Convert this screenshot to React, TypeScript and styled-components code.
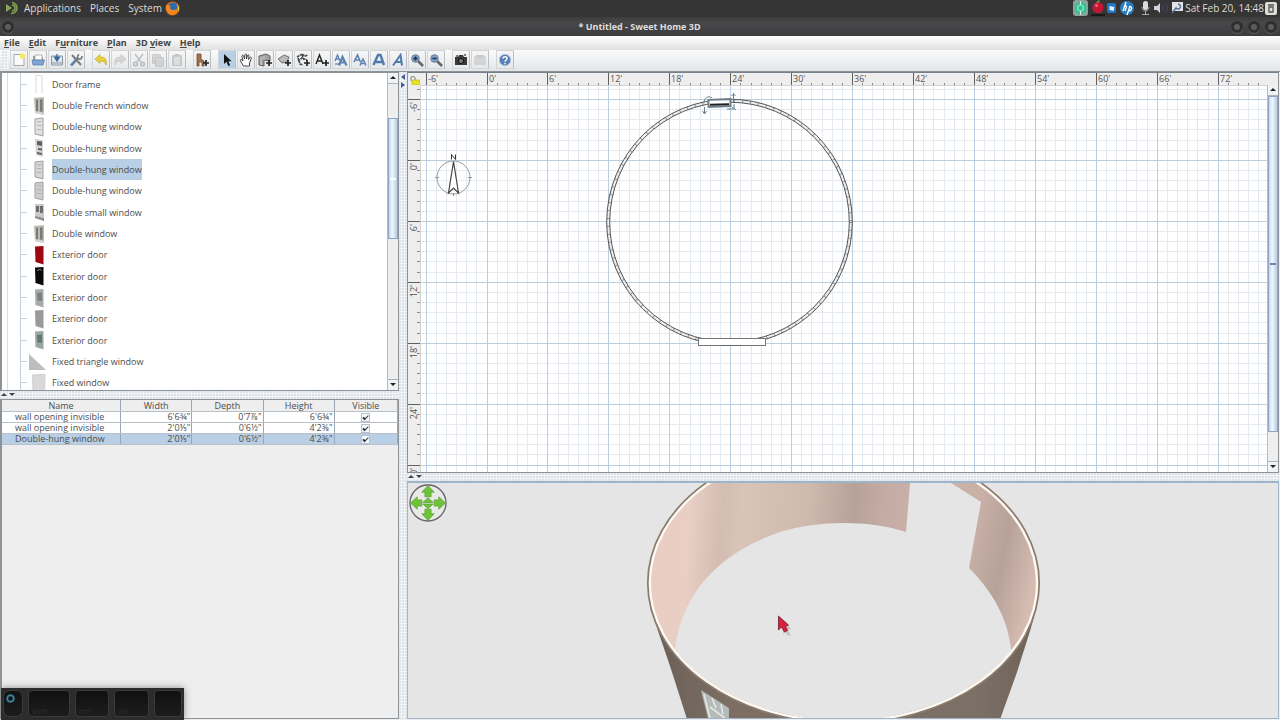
import React, { useLayoutEffect, useRef, useState } from 'react';
import styled, { createGlobalStyle, css } from 'styled-components';

const GlobalStyle = createGlobalStyle`
  *, *::before, *::after { box-sizing: border-box; }
  html, body, #root { height: 100%; }
  body {
    margin: 0;
    overflow: hidden;
    background: #eeeeee;
    color: #4c4c4c;
    font-family: 'Open Sans', 'Noto Sans', sans-serif;
    font-size: 9px;
    line-height: 11px;
  }
  button { font: inherit; color: inherit; padding: 0; border: 0; background: none; }
  ul { list-style: none; margin: 0; padding: 0; }
  svg { display: block; }
`;

const Desktop = styled.div`
  display: flex;
  flex-direction: column;
  height: 100%;
`;

/* ---------- desktop panel and window frame ---------- */

const Panel = styled.header`
  display: flex;
  align-items: center;
  flex: none;
  height: 17px;
  padding: 0 3px 1px 5px;
  background: #353535;
  color: #dedbd5;
  font-size: 10px;
  line-height: 16px;
`;
const PanelMenus = styled.nav`
  display: flex;
  gap: 9px;
  margin-right: 3px;
`;
const PanelMenu = styled.button`
  line-height: 16px;
`;
const PanelLogo = styled.span`
  width: 19px;
`;
const Tray = styled.div`
  display: flex;
  align-items: center;
  gap: 1px;
  margin-left: auto;
`;

const TitleBar = styled.div`
  display: grid;
  grid-template-columns: 60px 1fr 60px;
  align-items: center;
  flex: none;
  height: 19px;
  padding: 0 3px 0 2px;
  background: linear-gradient(#3d3d3d, #48484a 30%, #3c3c3e);
  color: #dedede;
`;
const WindowTitle = styled.h1`
  margin: 0;
  text-align: center;
  font-size: 9px;
  font-weight: 700;
  line-height: 16px;
`;
const WindowButtons = styled.div<{ $end?: boolean }>`
  display: flex;
  gap: 5px;
  justify-content: ${p => (p.$end ? 'flex-end' : 'flex-start')};
`;
const WindowButton = styled.button`
  width: 12px;
  height: 12px;
  border-radius: 50%;
  border: 3px solid #2f2f30;
  background: #5c5c5c;
  box-shadow: 0 1px 0 #5c5c5c;
`;

/* ---------- menu bar and toolbar ---------- */

const MenuBar = styled.nav`
  display: flex;
  align-items: flex-start;
  flex: none;
  gap: 9px;
  height: 14px;
  padding: 0 4px;
  background: linear-gradient(#ffffff, #e0e0e0);
`;
const MenuButton = styled.button`
  font-weight: 700;
  line-height: 13px;
  color: #444444;
`;

const ToolBar = styled.div`
  display: flex;
  align-items: center;
  flex: none;
  height: 22px;
  padding: 0 0 2px 2px;
  background: linear-gradient(#fbfbfb, #e2e5e8);
  border-bottom: 1px solid #8d9499;
`;
const dots = css`
  background-color: #f3f5f7;
  background-image: radial-gradient(circle at 1px 1px, #dbe1e7 1px, transparent 1px);
  background-size: 3px 3px;
`;
const Grip = styled.span`
  width: 6px;
  height: 18px;
  margin-right: 2px;
  ${dots}
`;
const ToolGroup = styled.div`
  display: flex;
  gap: 1px;
  margin-right: 7px;
`;
const Tool = styled.button<{ $active?: boolean; $dim?: boolean }>`
  display: grid;
  place-items: center;
  width: 18px;
  height: 19px;
  border: 1px solid #d3d6d9;
  border-right-color: #bcc0c4;
  background: ${p => (p.$active ? '#b8cfe5' : 'linear-gradient(#f6f6f6, #e6e8ea)')};
  svg { opacity: ${p => (p.$dim ? 0.3 : 1)}; }
`;

/* ---------- split panes ---------- */

const Workspace = styled.main`
  display: grid;
  flex: 1;
  min-height: 0;
  padding-bottom: 1px;
  grid-template-columns: 399px 8px minmax(0, 1fr);
`;
const LeftColumn = styled.div`
  display: grid;
  min-height: 0;
  grid-template-rows: minmax(0, 1fr) 8px 49.5%;
`;
const RightColumn = styled.div`
  display: grid;
  min-width: 0;
  min-height: 0;
  padding-right: 1px;
  grid-template-rows: minmax(0, 1fr) 8px 36.8%;
`;
const Divider = styled.div<{ $vertical?: boolean }>`
  display: flex;
  flex-direction: ${p => (p.$vertical ? 'column' : 'row')};
  gap: 2px;
  padding: ${p => (p.$vertical ? '2px 1px' : '1px 1px')};
  ${dots}
`;
const DividerButton = styled.button`
  display: grid;
  place-items: center;
  width: 6px;
  height: 6px;
  background: #eef0f2;
`;

/* ---------- furniture catalog ---------- */

const CatalogPane = styled.section`
  display: flex;
  min-height: 0;
  overflow: hidden;
  background: #ffffff;
  border: solid #8d9499;
  border-width: 1px 1px 1px 2px;
`;
const CatalogList = styled.ul`
  flex: 1;
  margin-left: 5px;
  border-left: 1px solid #d5dee8;
`;
const CatalogItem = styled.li`
  display: flex;
  align-items: center;
  height: 21px;
  margin-left: 12px;
  border-left: 1px solid #c3cfdd;
  &:nth-child(3n + 1) { height: 22px; }
  &::before {
    content: '';
    width: 6px;
    border-top: 1px solid #c3cfdd;
  }
`;
const CatalogIcon = styled.span`
  width: 20px;
  margin: 0 3px 0 2px;
`;
const CatalogName = styled.button<{ $selected?: boolean }>`
  height: 21px;
  font-size: 9px;
  line-height: 21px;
  background: ${p => (p.$selected ? '#b8cfe5' : 'transparent')};
`;

/* ---------- scroll bars ---------- */

const ScrollBar = styled.div`
  display: flex;
  flex-direction: column;
  width: 11px;
  background: #eeeeee;
  border-left: 1px solid #b4bec8;
`;
const ScrollArrow = styled.button`
  display: grid;
  place-items: center;
  flex: none;
  height: 11px;
  background: #f2f2f2;
  border: solid #a9b4c0;
  border-width: 0 0 1px;
  &:last-child { border-width: 1px 0 0; }
`;
const ScrollTrack = styled.div<{ $before: number; $size: number; $after: number }>`
  display: grid;
  flex: 1;
  grid-template-rows: ${p => `${p.$before}fr ${p.$size}fr ${p.$after}fr`};
`;
const ScrollThumb = styled.div<{ $mark: string }>`
  display: grid;
  grid-row: 2;
  place-items: center;
  border: 1px solid #8ba6c9;
  background: linear-gradient(90deg, #c2d5ec, #f3f7fc 40%, #b6cdea);
  &::after {
    content: '';
    width: 6px;
    height: 2px;
    background: ${p => p.$mark};
  }
`;

/* ---------- furniture table ---------- */

const TablePane = styled.section`
  min-height: 0;
  overflow: hidden;
  background: #eeeeee;
  border: solid #8d9499;
  border-width: 1px 1px 1px 2px;
`;
const FurnitureTable = styled.table`
  width: 100%;
  table-layout: fixed;
  border-collapse: collapse;
  th, td {
    height: 11px;
    padding: 0 1px;
    line-height: 10px;
    border-right: 1px solid #9ba7b4;
    border-bottom: 1px solid #b9c0c8;
    white-space: nowrap;
  }
  th { height: 12px; font-weight: 400; text-align: center; background: #eeeeee; }
`;
const Col = styled.col<{ $w: number }>`
  width: ${p => p.$w}%;
`;
const Row = styled.tr<{ $selected?: boolean }>`
  background: ${p => (p.$selected ? '#b8cfe5' : '#ffffff')};
  td { text-align: right; }
  td:first-child { text-align: left; padding-left: 13px; }
  td:last-child { text-align: center; }
`;
const Check = styled.input`
  appearance: none;
  display: grid;
  place-items: center;
  width: 9px;
  height: 9px;
  margin: 0 auto;
  border: 1px solid #b4c2d2;
  background: #f6f9fc;
  &:checked::before {
    content: '';
    width: 3px;
    height: 6px;
    border: solid #333333;
    border-width: 0 1px 2px 0;
    transform: rotate(45deg);
  }
`;

/* ---------- plan and 3D view ---------- */

const PlanPane = styled.section`
  display: grid;
  position: relative;
  min-height: 0;
  grid-template-columns: minmax(0, 1fr) 11px;
  grid-template-rows: 12px minmax(0, 1fr);
  border: 1px solid #8d9499;
  border-top-color: #75808a;
  background: #eeeeee;
`;
const PlanCanvas = styled.div`
  grid-row: 1 / 3;
  grid-column: 1;
  min-width: 0;
  min-height: 0;
  overflow: hidden;
`;
const PlanScroll = styled(ScrollBar)`
  grid-row: 2;
  grid-column: 2;
`;
const LockButton = styled.button`
  position: absolute;
  left: 2px;
  top: 2px;
`;
const ViewPane = styled.section`
  position: relative;
  min-height: 0;
  overflow: hidden;
  background: #e5e5e5;
  border: 1px solid #9db4ca;
  border-top-width: 2px;
`;
const NavControl = styled.div`
  position: absolute;
  left: 1px;
  top: 1px;
`;

/* ---------- on-screen key display ---------- */

const Keys = styled.div`
  position: fixed;
  left: 1px;
  bottom: 0;
  display: flex;
  gap: 5px;
  width: 183px;
  height: 32px;
  padding: 2px 2px 3px;
  background: #2c2c2d;
  box-shadow: 0 0 7px #8c8c8c;
`;
const Key = styled.span<{ $grow: number }>`
  flex: ${p => p.$grow} 1 0;
  padding: 14px 3px 0;
  border: 1px solid #3a3a3a;
  border-radius: 4px;
  background: linear-gradient(#111111, #1c1c1c);
  color: #303030;
  font-size: 8px;
  line-height: 11px;
`;
const MouseKey = styled(Key)`
  padding: 2px 1px;
  border-radius: 7px;
`;

/* ---------- small drawings ---------- */

type Dir = 'up' | 'down' | 'left' | 'right';
const arrowPaths: Record<Dir, string> = {
  up: 'M0 4 3 1 6 4z',
  down: 'M0 1 3 4 6 1z',
  left: 'M5 0 1 3 5 6z',
  right: 'M1 0 5 3 1 6z',
};
const Arrow = ({ dir, color = '#222' }: { dir: Dir; color?: string }) => (
  <svg width="6" height="6" viewBox="0 0 6 6" aria-hidden="true">
    <path d={arrowPaths[dir]} fill={color} />
  </svg>
);

const Plus = () => <path d="M11 7v6M8 10h6" stroke="#222" strokeWidth="1.7" />;

const Lens = ({ minus }: { minus?: boolean }) => (
  <>
    <path d="M8 8l5 5" stroke="#666" strokeWidth="2.6" />
    <circle cx="5.5" cy="5.5" r="3.8" fill="#7f9fc4" stroke="#6c8199" />
    <path d={minus ? 'M3.5 5.5h4' : 'M3.5 5.5h4M5.5 3.5v4'} stroke="#18304e" strokeWidth="1.5" />
  </>
);

const toolDrawings: Record<string, React.ReactNode> = {
  New: (
    <>
      <path d="M2 1.5h8l2 2v9H2z" fill="#fafafa" stroke="#a9a9a9" />
      <circle cx="10.5" cy="3" r="2.8" fill="#f3ec63" />
    </>
  ),
  Open: (
    <>
      <path d="M2 3h4l1 1h5v7H2z" fill="#9d9d9d" />
      <path d="M4 2h7v5H4z" fill="#fff" stroke="#999" strokeWidth=".7" />
      <path d="M1 7h12.5l-1.5 5H2z" fill="#7fa5d3" stroke="#5a80b0" strokeWidth=".8" />
    </>
  ),
  Save: (
    <>
      <path d="M1.5 3h11v9h-11z" fill="#e4e9ee" stroke="#8496a8" />
      <path d="M2 9h10v3H2z" fill="#b4bfca" />
      <path d="M7 1v3H4.5L7 8l2.5-4H7" fill="#3768a0" stroke="#3768a0" strokeWidth="1.2" />
    </>
  ),
  Preferences: (
    <>
      <path d="M2 12.5 9 5" stroke="#6483a8" strokeWidth="2.6" />
      <path d="M3 2l9 10" stroke="#7c7c7c" strokeWidth="2" />
      <path d="M10 1.500c-2 1-2 4 0 4.500S13 5 13 3" fill="none" stroke="#777" strokeWidth="1.6" />
    </>
  ),
  Undo: <path d="M1 6l5-4.500V4c5 0 7 2 6 8-1-3-3-4-6-4v2.500z" fill="#e8d13d" stroke="#c5ab3a" strokeWidth=".8" />,
  Redo: <path d="M13 6L8 1.500V4c-5 0-7 2-6 8 1-3 3-4 6-4v2.500z" fill="#9d9d9d" stroke="#777" strokeWidth=".8" />,
  Cut: (
    <g fill="none" stroke="#555" strokeWidth="1.6">
      <path d="M3 1l6 8M11 1L5 9" />
      <circle cx="3.5" cy="11" r="1.8" />
      <circle cx="10.5" cy="11" r="1.8" />
    </g>
  ),
  Copy: (
    <g fill="#999" stroke="#666">
      <rect x="1.5" y="1.5" width="8" height="9" rx="1" />
      <rect x="4.5" y="4.5" width="8" height="9" rx="1" />
    </g>
  ),
  Paste: (
    <>
      <rect x="2" y="2" width="10" height="11" rx="1" fill="#777" />
      <rect x="4" y="4" width="6" height="8" fill="#bbb" />
      <rect x="5" y="1" width="4" height="2" fill="#555" />
    </>
  ),
  'Add furniture': (
    <>
      <path d="M2 1h4v5l3 2v5H7V9H4v4H2z" fill="#a8714f" stroke="#6e4b35" strokeWidth=".8" />
      <Plus />
    </>
  ),
  Select: <path d="M4 1v10l2.500-2.300L8.300 13l1.800-.8-1.800-4h3.300z" fill="#111" />,
  Pan: (
    <path
      d="M4.500 13L1.500 8c-.8-1.500.8-2 1.500-1L4 8 3 3.500c-.3-1.500 1.300-1.700 1.700-.5L5.500 6 5.800 2c.2-1.200 1.600-1.200 1.700 0V6l1-3.500c.4-1.200 1.700-.8 1.500.5L9.500 6.500l1.600-2c.8-.8 1.700 0 1.200 1L10.500 10v3z"
      fill="#fff" stroke="#333" strokeWidth=".9"
    />
  ),
  'Create walls': (
    <>
      <path d="M1 3l7-2 4 2v5L6 7v6l-5-1z" fill="#a2a2a2" stroke="#555" strokeWidth=".9" />
      <path d="M3 4v8M6 3v4" stroke="#ddd" strokeWidth=".8" />
      <Plus />
    </>
  ),
  'Create rooms': (
    <>
      <path d="M1 6l6-4 5 2-2 5-5 1z" fill="#b9b9b9" stroke="#666" strokeWidth=".9" />
      <Plus />
    </>
  ),
  'Create polylines': (
    <>
      <path d="M1 4l5-3 3 2 3-1M2 8l4-3 5 2M2 5l2 6 3 1M6 2l2 5" fill="none" stroke="#4a4a4a" strokeWidth="1.6" strokeDasharray="2.5 .6" />
      <Plus />
    </>
  ),
  'Create dimensions': (
    <>
      <path d="M1 11L4.500 2 8 11M2.500 8h4" fill="none" stroke="#222" strokeWidth="1.4" />
      <Plus />
    </>
  ),
  'Increase text': (
    <g fill="none" stroke="#5c82b3">
      <path d="M1 8l2.500-6L6 8M2 6h3" strokeWidth="1.3" />
      <path d="M5 12.500L8.500 4l4 8.500M6.500 9.500h5" strokeWidth="2.2" />
      <path d="M1 11h4" strokeWidth="1.3" />
    </g>
  ),
  'Decrease text': (
    <g fill="none" stroke="#5c82b3">
      <path d="M1 9l3.500-7 3 7M2.500 7h4" strokeWidth="1.6" />
      <path d="M7 12.500L10 6l3 6.500M8 10.500h4" strokeWidth="1.5" />
    </g>
  ),
  Bold: <path d="M1.500 12L6 2h2.500L12 12M4 9h7" fill="none" stroke="#5079ad" strokeWidth="2.4" />,
  Italic: <path d="M2 12.500L9.500 2l1.500 10.500M5 9h6" fill="none" stroke="#5079ad" strokeWidth="2" />,
  'Zoom in': <Lens />,
  'Zoom out': <Lens minus />,
  'Create photo': (
    <>
      <path d="M1 4h3l1-2h4l1 2h3v8H1z" fill="#3a3a3a" />
      <circle cx="7" cy="8" r="2.6" fill="#777" stroke="#111" />
      <path d="M2 3h2M10 2h2" stroke="#555" strokeWidth="1.5" />
    </>
  ),
  'Create video': (
    <>
      <rect x="1" y="3" width="12" height="9" rx="1" fill="#999" />
      <path d="M3 2h8v3H3z" fill="#777" />
    </>
  ),
  Help: (
    <>
      <circle cx="7" cy="7" r="5.7" fill="#5580b6" stroke="#b3c6de" />
      <path d="M5 5.500C5 3 9.200 3.200 9 5.500 8.900 7 7 7 7 8.800M7 10v1.300" fill="none" stroke="#fff" strokeWidth="1.5" />
    </>
  ),
};

const toolGroups: string[][] = [
  ['New', 'Open', 'Save', 'Preferences'],
  ['Undo', 'Redo', 'Cut', 'Copy', 'Paste'],
  ['Add furniture'],
  ['Select', 'Pan', 'Create walls', 'Create rooms', 'Create polylines', 'Create dimensions',
    'Increase text', 'Decrease text', 'Bold', 'Italic', 'Zoom in', 'Zoom out'],
  ['Create photo', 'Create video'],
  ['Help'],
];
const dimmed = ['Redo', 'Cut', 'Copy', 'Paste', 'Create video'];

type ItemKind = 'frame' | 'french' | 'hung' | 'hungDark' | 'small' | 'door' | 'triangle' | 'fixed';
interface Item { name: string; kind: ItemKind; color?: string; pane?: string; selected?: boolean }
const items: Item[] = [
  { name: 'Door frame', kind: 'frame' },
  { name: 'Double French window', kind: 'french' },
  { name: 'Double-hung window', kind: 'hung', color: '#e2e2e2' },
  { name: 'Double-hung window', kind: 'hungDark' },
  { name: 'Double-hung window', kind: 'hung', color: '#d6d6d6', selected: true },
  { name: 'Double-hung window', kind: 'hung', color: '#cdcdcd' },
  { name: 'Double small window', kind: 'small' },
  { name: 'Double window', kind: 'french' },
  { name: 'Exterior door', kind: 'door', color: '#9c0710' },
  { name: 'Exterior door', kind: 'door', color: '#0a0a0a' },
  { name: 'Exterior door', kind: 'door', color: '#a6aaa8', pane: '#7b8280' },
  { name: 'Exterior door', kind: 'door', color: '#999b9a' },
  { name: 'Exterior door', kind: 'door', color: '#9ba7a2', pane: '#647a70' },
  { name: 'Fixed triangle window', kind: 'triangle' },
  { name: 'Fixed window', kind: 'fixed' },
];

const ItemDrawing = ({ kind, color, pane }: Item) => (
  <svg width="20" height="20" viewBox="0 0 20 20" aria-hidden="true">
    {kind === 'frame' && <path d="M7 19V1l6 1v17" fill="none" stroke="#dadada" />}
    {kind === 'french' && (
      <>
        <path d="M5 2l10-1v18l-9-2z" fill="#b9bbb7" />
        <path d="M7 4l2-.5v12L7 15zM11 3.500l2.500-.5v13l-2.500-.5z" fill="#777b76" />
        <path d="M6 15l9 2v2l-9-2z" fill="#d5d6d2" />
      </>
    )}
    {kind === 'hung' && (
      <>
        <path d="M6 2l8-1v18l-8-2z" fill={color} stroke="#a0a0a0" />
        <path d="M8 5l4.500-.3M8 8.500h4.500M8 12.500l4.500.3" fill="none" stroke="#b2b2b2" />
      </>
    )}
    {kind === 'hungDark' && (
      <>
        <path d="M6 1l8 1v17l-7-2z" fill="#d3d4d3" />
        <path d="M8 3l5 .5V8L8 7zM9 10l4 .5v2L9 12zM8 14l5 1v2l-5-1z" fill="#5d615f" />
      </>
    )}
    {kind === 'small' && (
      <>
        <path d="M6 2h9v17l-9-3z" fill="#c9cbc7" />
        <path d="M7 4h3v6H7zM11 4h3v7h-3z" fill="#6b6f6b" />
        <path d="M6 14l9 2v3l-9-3z" fill="#8f918c" />
      </>
    )}
    {kind === 'door' && (
      <>
        <path d="M6 1.500L14.500 1v18.500L6.500 17z" fill={color} />
        {pane && <path d="M8 5l5-.5V13l-4.500-.5z" fill={pane} />}
        {color === '#0a0a0a' && <path d="M8.500 5c1-2 3-2 4-.5" fill="none" stroke="#999" />}
      </>
    )}
    {kind === 'triangle' && <path d="M0 2v16h17z" fill="#bdbdbd" />}
    {kind === 'fixed' && <path d="M3.500 2L16 1.500l-.5 17L4 19z" fill="#d9d9d9" stroke="#cecece" />}
  </svg>
);

const rows = [
  { name: 'wall opening invisible', width: `6'6¾"`, depth: `0'7⅞"`, height: `6'6¾"` },
  { name: 'wall opening invisible', width: `2'0⅕"`, depth: `0'6½"`, height: `4'2⅜"` },
  { name: 'Double-hung window', width: `2'0⅕"`, depth: `0'6½"`, height: `4'2⅜"`, selected: true },
];

/* Plan geometry: six feet span about 61 units, and each minor line is one foot. */
const RULER = 12;
const ORIGIN = { x: 17.6, y: 26 };
const FOOT = 10.155;

const gridLines = (origin: number, length: number) => {
  const lines: { at: number; foot: number }[] = [];
  for (let foot = -6; foot < 600; foot += 1) {
    const at = Math.round(origin + (foot + 6) * FOOT);
    if (at > length) break;
    lines.push({ at, foot });
  }
  return lines;
};

const PlanDrawing = () => {
  const ref = useRef<SVGSVGElement>(null);
  const [size, setSize] = useState({ width: 0, height: 0 });
  useLayoutEffect(() => {
    const svg = ref.current;
    if (!svg) return undefined;
    const measure = () => setSize({ width: svg.clientWidth, height: svg.clientHeight });
    measure();
    const observer = new ResizeObserver(measure);
    observer.observe(svg);
    return () => observer.disconnect();
  }, []);

  const { width, height } = size;
  const xs = gridLines(ORIGIN.x, width);
  const ys = [{ at: 16, foot: -7 }, ...gridLines(ORIGIN.y, height)];
  const majorX = xs.filter(l => l.foot % 6 === 0);
  const majorY = ys.filter(l => l.foot % 6 === 0);

  return (
    <svg ref={ref} width="100%" height="100%" role="img" aria-label="Home plan">
      <rect x={RULER} y={RULER} width="100%" height="100%" fill="#fff" />
      <path
        d={xs.map(l => `M${l.at}.5 12V${height}`).join('') + ys.map(l => `M12 ${l.at}.5H${width}`).join('')}
        stroke="#e4eaf0" fill="none"
      />
      <path
        d={majorX.map(l => `M${l.at}.5 12V${height}`).join('') + majorY.map(l => `M12 ${l.at}.5H${width}`).join('')}
        stroke="#b9cfe0" fill="none"
      />
      <path d={`M12.5 12V${height}M12 12.5H${width}`} stroke="#d3d3d3" />
      <path
        d={xs.map(l => `M${l.at}.5 10v2`).join('') + ys.map(l => `M9 ${l.at}.5h3`).join('')}
        stroke="#8a8a8a"
      />
      <path
        d={majorX.map(l => `M${l.at}.5 0v12`).join('') + majorY.map(l => `M0 ${l.at}.5h12`).join('')}
        stroke="#606060"
      />
      <g fill="#555" fontSize="9">
        {majorX.map(l => <text key={l.foot} x={l.at + 2} y="9">{`${l.foot}'`}</text>)}
        {majorY.map(l => (
          <text key={l.foot} transform={`translate(9 ${l.at + 3}) rotate(-90)`} textAnchor="end">{`${l.foot}'`}</text>
        ))}
      </g>

      <g fill="none" stroke="#9a9a9a">
        <circle cx="45.5" cy="104.5" r="16.5" />
        <path d="M27 104.500h4M60 104.500h4M45.500 120v3" />
      </g>
      <path d="M45.500 88.500L50.500 120l-5-5-5 5z" fill="#fff" stroke="#444" strokeWidth="1.2" />
      <path d="M43.500 86.500v-5l4 5v-5" fill="none" stroke="#333" />

      <g fill="none">
        <circle cx="321.5" cy="149" r="121.3" stroke="#ededed" strokeWidth="3" />
        <circle cx="321.5" cy="149" r="121.3" stroke="#999" strokeWidth="3" strokeDasharray="1 7" />
        <circle cx="321.5" cy="149" r="122.8" stroke="#555" />
        <circle cx="321.5" cy="149" r="119.8" stroke="#555" />
      </g>
      <rect x="290.5" y="265.5" width="67" height="7" fill="#fff" stroke="#777" />
      <path d="M313 272.500h20" stroke="#666" />
      <g transform="rotate(-2 311 30)">
        <rect x="300.5" y="26.5" width="22" height="7" fill="#fff" stroke="#6b7f8c" strokeWidth="2" />
        <path d="M302 31.500h19" stroke="#222" strokeWidth="2" />
      </g>
      <path
        d="M304 25c-4-3-8 0-8 5M296.500 34v6m-2-2l2 3 2-3M325.500 20v9m-2-6l2-2 2 2M319 36h7v-5m-2 3l4 3"
        fill="none" stroke="#6b7f8c"
      />
    </svg>
  );
};

const RIM = { cx: 843.5, cy: 583, rx: 194.5, ry: 139.5 };

const ViewDrawing = () => (
  <svg width="100%" height="100%" viewBox="408 483 870 235" preserveAspectRatio="xMidYMin slice" role="img" aria-label="3D view">
    <defs>
      <linearGradient id="backWall" gradientUnits="userSpaceOnUse" x1="650" x2="910" y1="540" y2="560">
        <stop offset="0" stopColor="#e9cdc3" />
        <stop offset=".15" stopColor="#e8cec4" />
        <stop offset=".27" stopColor="#d3bcb1" />
        <stop offset=".34" stopColor="#d9c4b7" />
        <stop offset=".6" stopColor="#cfb9ae" />
        <stop offset=".77" stopColor="#b7a199" />
        <stop offset=".88" stopColor="#c4aca4" />
        <stop offset="1" stopColor="#c9b0a8" />
      </linearGradient>
      <linearGradient id="sideWall" gradientUnits="userSpaceOnUse" x1="965" x2="1036" y1="560" y2="575">
        <stop offset="0" stopColor="#c9b1a8" />
        <stop offset=".5" stopColor="#b7a199" />
        <stop offset="1" stopColor="#d6bdb2" />
      </linearGradient>
      <linearGradient id="outerWall" gradientUnits="userSpaceOnUse" x1="650" x2="1038" y1="0" y2="0">
        <stop offset="0" stopColor="#6a5e55" />
        <stop offset=".2" stopColor="#7c6e63" />
        <stop offset=".85" stopColor="#7c6f65" />
        <stop offset="1" stopColor="#6d6158" />
      </linearGradient>
      <clipPath id="rimClip"><ellipse {...RIM} /></clipPath>
    </defs>
    <path d="M648 592C652 618 664 646 673 675L688 722H999L1017 672C1027 640 1036 615 1039 592z" fill="url(#outerWall)" />
    <ellipse {...RIM} fill="#e5e5e5" />
    <g clipPath="url(#rimClip)">
      <path d="M640 440H913L910 483 906 532C870 520 820 520 780 532 725 551 676 590 674 665H640z" fill="url(#backWall)" />
      <path d="M951 440V483L981 502 969 568C995 594 1012 625 1012 665H1050V440z" fill="url(#sideWall)" />
    </g>
    <ellipse {...RIM} fill="none" stroke="#8a7b6f" strokeWidth="4" />
    <ellipse cx="843.5" cy="583" rx="193.5" ry="138.5" fill="none" stroke="#fff9f2" strokeWidth="2.5" />
    <path d="M701 690l28 18v14h-20z" fill="#b5bbb8" />
    <path d="M704 694l6 24M712 698l4 10M721 704l2 10M710 707l15 11" stroke="#e7ecea" strokeWidth="1.5" />
    <path d="M785 621l6 8-3 1 3 5-3 1-3-4-2 3z" fill="#c6c6c6" />
    <path d="M778.500 616v14l3-3 3 5 3-1.500-2-4.500 3-1z" fill="#dc1f3f" stroke="#7b2734" strokeWidth=".9" />
  </svg>
);

const greenArrow = 'M18.500 1.500L24.500 8h-3v4.500h-6V8h-3z';

export default function App() {
  return (
    <>
      <GlobalStyle />
      <Desktop>
        <Panel>
          <PanelLogo>
            <svg width="15" height="14" viewBox="0 0 15 14" aria-hidden="true">
              <path d="M1 3l6 4-6 4z" fill="#87a556" />
              <path d="M7 1.500a5.500 5.500 0 1 1-1 11M7 4a3 3 0 0 1 0 6" fill="none" stroke="#87a556" strokeWidth="1.5" />
            </svg>
          </PanelLogo>
          <PanelMenus>
            <PanelMenu>Applications</PanelMenu>
            <PanelMenu>Places</PanelMenu>
            <PanelMenu>System</PanelMenu>
          </PanelMenus>
          <svg width="15" height="15" viewBox="0 0 15 15" aria-hidden="true">
            <circle cx="7.5" cy="7.5" r="7" fill="#e5661b" />
            <circle cx="8" cy="6" r="4.5" fill="#2b6cab" />
            <path d="M1 4c2 0 3 1 5 1-2 1-1 4 2 4s4-1 4-2c1 4-2 7-5 7S1 10 1 4z" fill="#f08a1f" />
            <path d="M12 3c2 2 3 5 1 8 0-3 0-5-1-8z" fill="#f6c63a" />
          </svg>
          <Tray>
            <svg width="112" height="16" viewBox="0 0 112 16" aria-hidden="true">
              <rect x="1" y="0" width="15" height="16" rx="3" fill="#8ba39b" />
              <circle cx="8.5" cy="8" r="6" fill="#35c294" />
              <circle cx="8.5" cy="8" r="3" fill="none" stroke="#a8f0d8" />
              <path d="M8.500 1v4M8.500 11v4" stroke="#d5f5ea" />
              <circle cx="26" cy="7.5" r="5.5" fill="#c31733" />
              <path d="M25.500 3c0-1 1-2 2-2" stroke="#6aa13f" fill="none" strokeWidth="1.5" />
              <circle cx="24.5" cy="5.5" r="1.5" fill="#ec6a7c" />
              <path d="M19 15h14" stroke="#111" strokeWidth="1.5" />
              <rect x="35" y="3" width="9" height="10" rx="2" fill="#1f78c8" />
              <path d="M37.500 6l5 1-1 4-4-1z" fill="#e6f2ff" />
              <circle cx="55" cy="8" r="7" fill="#2a7fc4" />
              <path d="M54 2l-3 9M52 7c2-2 3-1 2 1l-1 3M58 6l-3 9M57 7c3-2 4 4-1 4" fill="none" stroke="#fff" strokeWidth="1.3" />
              <rect x="71" y="1" width="5" height="9" rx="2.5" fill="#dcdcdc" />
              <path d="M70 7c0 5 7 5 7 0M73.500 11v3M70 14.500h7" fill="none" stroke="#aaa" />
              <path d="M82 6h3l3-3v10l-3-3h-3z" fill="#d2d2d2" />
              <path d="M90 5c1.500 2 1.500 4 0 6M93 3c3 3 3 7 0 10" fill="none" stroke="#43506f" />
              <rect x="100" y="2" width="11" height="9" fill="#e2e4e8" />
              <path d="M106 4a2.500 2.500 0 1 1-2 4l-4 5" fill="none" stroke="#59719b" strokeWidth="1.5" />
            </svg>
            <time>Sat Feb 20, 14:48</time>
            <svg width="12" height="13" viewBox="0 0 12 13" aria-hidden="true">
              <rect width="12" height="13" rx="2" fill="#deded9" />
              <path d="M3 3h6M4 5h4v5H4z" fill="none" stroke="#555" strokeWidth="1.3" />
            </svg>
          </Tray>
        </Panel>

        <TitleBar>
          <WindowButtons><WindowButton aria-label="Window menu" /></WindowButtons>
          <WindowTitle>* Untitled - Sweet Home 3D</WindowTitle>
          <WindowButtons $end>
            <WindowButton aria-label="Minimize" />
            <WindowButton aria-label="Maximize" />
            <WindowButton aria-label="Close" />
          </WindowButtons>
        </TitleBar>

        <MenuBar>
          <MenuButton><u>F</u>ile</MenuButton>
          <MenuButton><u>E</u>dit</MenuButton>
          <MenuButton>F<u>u</u>rniture</MenuButton>
          <MenuButton><u>P</u>lan</MenuButton>
          <MenuButton>3D <u>v</u>iew</MenuButton>
          <MenuButton><u>H</u>elp</MenuButton>
        </MenuBar>

        <ToolBar role="toolbar">
          <Grip />
          {toolGroups.map(group => (
            <ToolGroup key={group[0]}>
              {group.map(name => (
                <Tool key={name} aria-label={name} $active={name === 'Select'} $dim={dimmed.includes(name)}>
                  <svg width="14" height="14" viewBox="0 0 14 14" aria-hidden="true">{toolDrawings[name]}</svg>
                </Tool>
              ))}
            </ToolGroup>
          ))}
        </ToolBar>

        <Workspace>
          <LeftColumn>
            <CatalogPane>
              <CatalogList>
                {items.map((item, i) => (
                  <CatalogItem key={i}>
                    <CatalogIcon><ItemDrawing {...item} /></CatalogIcon>
                    <CatalogName $selected={item.selected}>{item.name}</CatalogName>
                  </CatalogItem>
                ))}
              </CatalogList>
              <ScrollBar>
                <ScrollArrow aria-label="Scroll up"><Arrow dir="up" /></ScrollArrow>
                <ScrollTrack $before={34} $size={122} $after={140}><ScrollThumb $mark="#ffffff" /></ScrollTrack>
                <ScrollArrow aria-label="Scroll down"><Arrow dir="down" /></ScrollArrow>
              </ScrollBar>
            </CatalogPane>
            <Divider>
              <DividerButton aria-label="Collapse up"><Arrow dir="up" color="#3a4350" /></DividerButton>
              <DividerButton aria-label="Collapse down"><Arrow dir="down" color="#3a4350" /></DividerButton>
            </Divider>
            <TablePane>
              <FurnitureTable>
                <colgroup><Col $w={30} /><Col $w={18} /><Col $w={18} /><Col $w={18} /><Col $w={16} /></colgroup>
                <thead>
                  <tr><th>Name</th><th>Width</th><th>Depth</th><th>Height</th><th>Visible</th></tr>
                </thead>
                <tbody>
                  {rows.map((r, i) => (
                    <Row key={i} $selected={r.selected}>
                      <td>{r.name}</td><td>{r.width}</td><td>{r.depth}</td><td>{r.height}</td>
                      <td><Check type="checkbox" defaultChecked aria-label={`${r.name} visible`} /></td>
                    </Row>
                  ))}
                </tbody>
              </FurnitureTable>
            </TablePane>
          </LeftColumn>

          <Divider $vertical>
            <DividerButton aria-label="Collapse left"><Arrow dir="left" color="#3f5d94" /></DividerButton>
            <DividerButton aria-label="Collapse right"><Arrow dir="right" color="#3f5d94" /></DividerButton>
          </Divider>

          <RightColumn>
            <PlanPane>
              <PlanCanvas><PlanDrawing /></PlanCanvas>
              <PlanScroll>
                <ScrollArrow aria-label="Scroll up"><Arrow dir="up" /></ScrollArrow>
                <ScrollTrack $before={0} $size={337} $after={29}><ScrollThumb $mark="#7080ac" /></ScrollTrack>
                <ScrollArrow aria-label="Scroll down"><Arrow dir="down" /></ScrollArrow>
              </PlanScroll>
              <LockButton aria-label="Lock base plan">
                <svg width="10" height="10" viewBox="0 0 10 10" aria-hidden="true">
                  <path d="M1 6V3c0-2 4-2 4 0v2" fill="none" stroke="#8a8a8a" strokeWidth="1.2" />
                  <rect x="2" y="5" width="8" height="5" rx="1" fill="#e9e222" stroke="#bdb52e" strokeWidth=".7" />
                </svg>
              </LockButton>
            </PlanPane>
            <Divider>
              <DividerButton aria-label="Collapse up"><Arrow dir="up" color="#3a4350" /></DividerButton>
              <DividerButton aria-label="Collapse down"><Arrow dir="down" color="#3a4350" /></DividerButton>
            </Divider>
            <ViewPane>
              <ViewDrawing />
              <NavControl>
                <svg width="38" height="38" viewBox="0 0 37 37" role="img" aria-label="Navigation arrows">
                  <circle cx="18.5" cy="18.5" r="17.5" fill="#e9e9e9" stroke="#666" strokeWidth="1.3" />
                  <g fill="#6cc436" stroke="#5a9e38" strokeWidth=".7">
                    {[0, 90, 180, 270].map(a => <path key={a} d={greenArrow} transform={`rotate(${a} 18.5 18.5)`} />)}
                    <path d="M13.500 18l5-4.500 5 4.500zM13.500 19.500l5 4.500 5-4.500z" />
                  </g>
                </svg>
              </NavControl>
            </ViewPane>
          </RightColumn>
        </Workspace>

        <Keys>
          <MouseKey $grow={20}>
            <svg width="11" height="11" viewBox="0 0 11 11" aria-hidden="true">
              <circle cx="5.5" cy="5.5" r="3.3" fill="none" stroke="#3a7f9c" strokeWidth="2" />
            </svg>
          </MouseKey>
          <Key $grow={43}>shift</Key>
          <Key $grow={34}>ctrl</Key>
          <Key $grow={33}>alt</Key>
          <Key $grow={26} />
        </Keys>
      </Desktop>
    </>
  );
}
